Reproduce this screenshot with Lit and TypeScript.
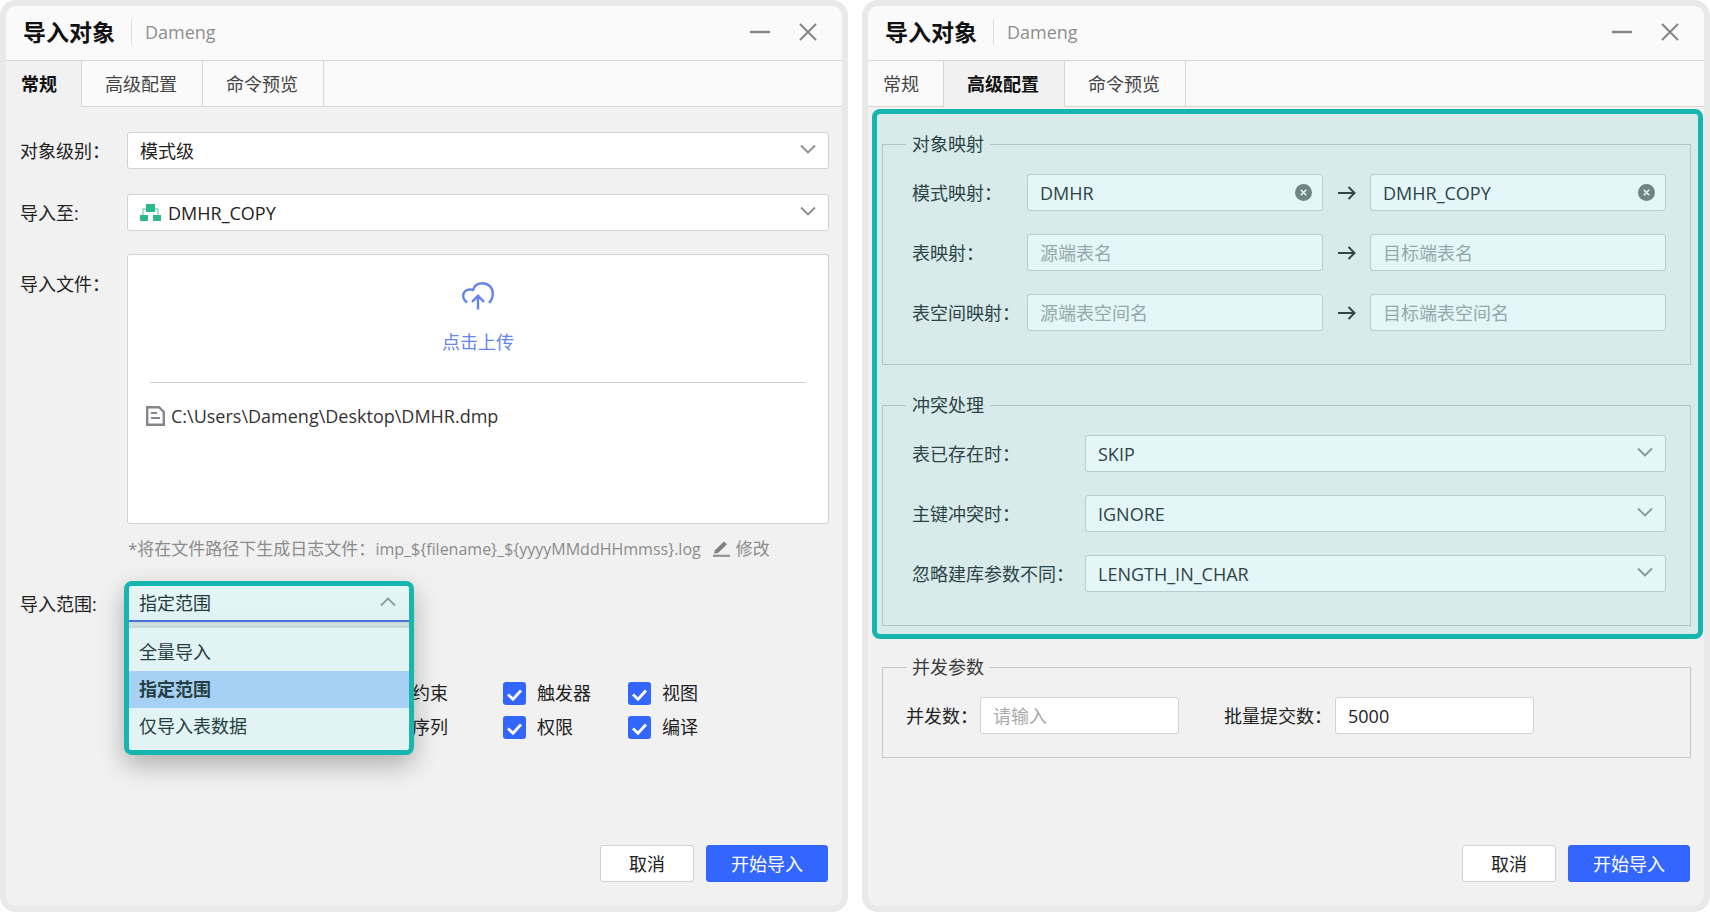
import { LitElement, html, css, nothing } from "lit";
import { customElement, property } from "lit/decorators.js";

const chevron = (up = false) => html`<svg class="chevron" viewBox="0 0 16 10" width="16" height="10" aria-hidden="true">
  <path d=${up ? "M1 8.5 8 1.5 15 8.5" : "M1 1.5 8 8.5 15 1.5"} fill="none" stroke="currentColor" stroke-width="1.8" />
</svg>`;

const arrow = html`<svg class="arrow" viewBox="0 0 18 16" width="18" height="16" aria-hidden="true">
  <path d="M0 8H16M10.5 2 16.5 8 10.5 14" fill="none" stroke="currentColor" stroke-width="2" />
</svg>`;

const base = css`
  :host {
    display: block;
    box-sizing: border-box;
  }
  *,
  *::before,
  *::after {
    box-sizing: border-box;
  }
  button,
  input,
  select {
    font: inherit;
    color: inherit;
    margin: 0;
  }
  button {
    cursor: pointer;
  }
  .field {
    display: grid;
    align-items: center;
    min-width: 0;
  }
  .field > * {
    grid-area: 1 / 1;
  }
  .box {
    appearance: none;
    width: 100%;
    min-width: 0;
    height: 37px;
    padding: 0 12px;
    border: 1px solid var(--line, #d2d2d2);
    border-radius: 3px;
    background: var(--fill, #fff);
    color: var(--ink, #222);
    outline: none;
  }
  .box::placeholder {
    color: var(--faint, #aaa);
    opacity: 1;
  }
  .chevron {
    justify-self: end;
    margin: 0 13px 4px 0;
    color: var(--mark, #8c8c8c);
    pointer-events: none;
  }
`;

@customElement("import-dialog")
class ImportDialog extends LitElement {
  @property({ type: Number }) active = 0;

  static styles = [
    base,
    css`
      :host {
        display: flex;
        flex-direction: column;
        flex: 1 1 0;
        min-width: 0;
        border: 6px solid #e9e9e9;
        border-radius: 16px;
        background: #f1f1f1;
      }
      .head {
        display: flex;
        align-items: center;
        height: 55px;
        padding: 0 22px 2px 17px;
        border-bottom: 1px solid #d6d6d6;
        border-radius: 10px 10px 0 0;
        background: #fafafa;
      }
      .title {
        margin: 0;
        font-size: 23px;
        line-height: 32px;
        font-weight: 700;
        color: #111;
      }
      .source {
        margin-left: 16px;
        padding-left: 13px;
        border-left: 1px solid #dcdcdc;
        line-height: 26px;
        color: #8e8e8e;
      }
      .tools {
        display: flex;
        gap: 24px;
        margin-left: auto;
      }
      .tool {
        display: grid;
        place-items: center;
        width: 24px;
        height: 24px;
        padding: 0;
        border: 0;
        background: none;
        color: #858585;
      }
      .tabs {
        display: flex;
        height: 46px;
        background: #fafafa;
      }
      .tabs::after {
        content: "";
        flex: 1;
        border-bottom: 1px solid #d6d6d6;
      }
      .tab {
        padding: 0 25px 2px 23px;
        border: 0;
        border-right: 1px solid #d6d6d6;
        border-bottom: 1px solid #d6d6d6;
        background: none;
        color: #444;
      }
      .tab:first-child {
        padding-right: 24px;
        padding-left: 15px;
      }
      .tab[aria-selected="true"] {
        border-bottom-color: transparent;
        background: #f1f1f1;
        font-weight: 700;
        color: #111;
      }
      .body {
        flex: 1;
      }
      .foot {
        display: flex;
        justify-content: flex-end;
        gap: 12px;
        padding: 0 14px 24px;
      }
      .action {
        height: 37px;
        padding: 0 24px 2px;
        border: 1px solid #3366ff;
        border-radius: 3px;
        background: #3366ff;
        color: #fff;
      }
      .action.plain {
        padding: 0 28px 2px;
        border-color: #d0d0d0;
        background: #fff;
        color: #222;
      }
    `,
  ];

  render() {
    const tabs = ["常规", "高级配置", "命令预览"];
    return html`
      <header class="head">
        <h1 class="title">导入对象</h1>
        <span class="source">Dameng</span>
        <div class="tools">
          <button class="tool" aria-label="最小化">
            <svg viewBox="0 0 20 18" width="20" height="18"><path d="M0 9H20" stroke="currentColor" stroke-width="2.4" /></svg>
          </button>
          <button class="tool" aria-label="关闭">
            <svg viewBox="0 0 18 18" width="18" height="18">
              <path d="M1 1 17 17M17 1 1 17" stroke="currentColor" stroke-width="2" />
            </svg>
          </button>
        </div>
      </header>
      <div class="tabs" role="tablist">
        ${tabs.map((t, i) => html`<button class="tab" role="tab" aria-selected=${i === this.active}>${t}</button>`)}
      </div>
      <div class="body"><slot></slot></div>
      <footer class="foot">
        <button class="action plain">取消</button>
        <button class="action">开始导入</button>
      </footer>
    `;
  }
}

@customElement("general-form")
class GeneralForm extends LitElement {
  static styles = [
    base,
    css`
      :host {
        padding: 25px 13px 0 14px;
      }
      .row {
        display: grid;
        grid-template-columns: 107px minmax(0, 1fr);
        align-items: center;
      }
      .row + .row {
        margin-top: 25px;
      }
      .row + .row.file {
        align-items: start;
        margin-top: 23px;
      }
      .label {
        line-height: 24px;
        color: #222;
      }
      .file .label {
        padding-top: 18px;
      }
      .with-icon .box {
        padding-left: 40px;
      }
      .lead {
        margin-left: 13px;
        pointer-events: none;
      }
      .drop {
        height: 270px;
        padding: 0 22px;
        border: 1px solid #d2d2d2;
        border-radius: 3px;
        background: #fff;
      }
      .upload {
        display: flex;
        flex-direction: column;
        align-items: center;
        gap: 18px;
        width: 100%;
        height: 128px;
        padding: 27px 0 0;
        border: 0;
        border-bottom: 1px solid #cfcfcf;
        background: none;
        line-height: 28px;
        color: #6485ee;
      }
      .path {
        display: flex;
        align-items: center;
        gap: 6px;
        margin: 19px 0 0 -4px;
        line-height: 28px;
        color: #333;
      }
      .hint {
        display: flex;
        align-items: center;
        margin: 12px 0 0;
        padding-left: 108px;
        font-size: 17px;
        line-height: 26px;
        color: #8b8b8b;
      }
      .pattern {
        font-size: 16px;
      }
      .edit {
        display: flex;
        align-items: center;
        gap: 6px;
        margin-left: 12px;
        padding: 0;
        border: 0;
        background: none;
      }
      .hint + .row {
        margin-top: 19px;
      }
      .range {
        position: relative;
        height: 46px;
      }
      .menu {
        position: absolute;
        top: 0;
        left: -3px;
        width: 290px;
        border: 5px solid #16b5ae;
        border-radius: 8px;
        background: #e1f3f2;
        box-shadow: 0 10px 26px rgba(0, 0, 0, 0.28);
        overflow: hidden;
        --fill: linear-gradient(#e4f7f7, #dff1f0);
        --mark: #8aa09f;
        --ink: #24393a;
      }
      .menu .box {
        height: 36px;
        padding: 0 10px;
        border: 0;
        border-bottom: 2px solid #4a6fdc;
        border-radius: 0;
      }
      .list {
        margin: 0;
        padding: 12px 0 5px;
        list-style: none;
        background: linear-gradient(#c7dad9, #cfe1e0 4px, #b5c8c7 5px, #e1f3f2 6px);
      }
      .option {
        padding: 0 10px;
        line-height: 37px;
        color: #263f41;
      }
      .option[aria-selected="true"] {
        background: #a7d1f4;
        font-weight: 600;
      }
      .kinds {
        display: grid;
        grid-template-columns: repeat(3, 125px);
        row-gap: 11px;
        margin: 55px 0 0;
        padding: 0 0 0 358px;
        border: 0;
      }
      .kind {
        display: flex;
        align-items: center;
        gap: 11px;
        height: 23px;
        line-height: 23px;
        color: #222;
      }
      .tick {
        display: grid;
      }
      .tick > * {
        grid-area: 1 / 1;
      }
      .check {
        appearance: none;
        width: 23px;
        height: 23px;
        border-radius: 3px;
        background: #3366ff;
      }
    `,
  ];

  render() {
    return html`
      <div class="row">
        <label class="label" for="level">对象级别：</label>
        <div class="field">
          <select class="box" id="level"><option>模式级</option></select>${chevron()}
        </div>
      </div>
      <div class="row">
        <label class="label" for="target">导入至:</label>
        <div class="field with-icon">
          <select class="box" id="target"><option>DMHR_COPY</option></select>
          <svg class="lead" viewBox="0 0 21 18" width="21" height="18" aria-hidden="true">
            <path d="M6 5H3V12M15 5H18V12" fill="none" stroke="#8ed8bd" stroke-width="1.4" />
            <path d="M6 0H15V8H6ZM0 11H8V17H0ZM13 11H21V17H13Z" fill="#2cb88c" />
          </svg>
          ${chevron()}
        </div>
      </div>
      <div class="row file">
        <span class="label">导入文件：</span>
        <div class="drop">
          <button class="upload">
            <svg viewBox="0 0 32 28" width="32" height="28" aria-hidden="true">
              <path
                d="M5.2 20.5C2.6 18.9 1.2 16.5 1.2 13.8C1.2 9.8 4.2 7.4 8.2 7.5L11 7.9C12.3 3.8 15.9 1.2 20.3 1.2C26.3 1.2 30.8 5.6 30.8 11.4C30.8 15.6 29.5 18.4 27 20.8M16 27.5V14M10 19.8 16 13.8 22 19.8"
                fill="none" stroke="currentColor" stroke-width="2.4" />
            </svg>
            点击上传
          </button>
          <div class="path">
            <svg viewBox="0 0 19 20" width="19" height="20" aria-hidden="true">
              <path d="M1.200 1.200H13L17.800 6V18.800H1.200Z" fill="none" stroke="#85858c" stroke-width="2.400" />
              <path d="M5 7H11M5 12H14" stroke="#85858c" stroke-width="2" />
            </svg>
            C:\\Users\\Dameng\\Desktop\\DMHR.dmp
          </div>
        </div>
      </div>
      <p class="hint">
        <span>*将在文件路径下生成日志文件：<span class="pattern">imp_\${filename}_\${yyyyMMddHHmmss}.log</span></span>
        <button class="edit">
          <svg viewBox="0 0 17 16" width="17" height="16" aria-hidden="true">
            <path d="M0 14.8H17" stroke="#929292" stroke-width="2.2" />
            <path d="M1 12.5 2 9.2 11 0.5 14 3.2 5 12Z" fill="#7f7f7f" />
          </svg>
          修改
        </button>
      </p>
      <div class="row">
        <label class="label" for="range">导入范围:</label>
        <div class="range">
          <div class="menu">
            <div class="field">
              <select class="box" id="range"><option>指定范围</option></select>${chevron(true)}
            </div>
            <ul class="list" role="listbox" aria-label="导入范围">
              ${["全量导入", "指定范围", "仅导入表数据"].map(
                (o) => html`<li class="option" role="option" aria-selected=${o === "指定范围"}>${o}</li>`
              )}
            </ul>
          </div>
        </div>
      </div>
      <fieldset class="kinds">
        ${["约束", "触发器", "视图", "序列", "权限", "编译"].map(
          (k) => html`<label class="kind">
            <span class="tick">
              <input class="check" type="checkbox" checked />
              <svg viewBox="0 0 23 23" width="23" height="23" aria-hidden="true">
                <path d="M5 12.5 10 17.3 18 8.5" fill="none" stroke="#fff" stroke-width="2.8" />
              </svg>
            </span>
            ${k}
          </label>`
        )}
      </fieldset>
    `;
  }
}

@customElement("advanced-form")
class AdvancedForm extends LitElement {
  static styles = [
    base,
    css`
      .marked {
        margin: 2px 1px 0 4px;
        padding: 16px 7px 8px 5px;
        border: 5px solid #16b5ae;
        border-radius: 8px;
        background: #d8eaea;
        --line: #b7cccc;
        --fill: #e4f6f7;
        --ink: #2c4446;
        --faint: #93a9a9;
        --mark: #829a9a;
        --edge: #b3c5c5;
      }
      .group {
        min-width: 0;
        margin: 0;
        padding: 16px 24px 33px 23px;
        border: 1px solid var(--edge, #c9c9c9);
      }
      .group + .group {
        margin-top: 26px;
      }
      .group.loose {
        margin: 14px 13px 0 14px;
        padding-bottom: 23px;
      }
      .name {
        padding: 0 6px;
        line-height: 28px;
        color: var(--ink, #3a3a3a);
      }
      .pair,
      .choice {
        display: grid;
        align-items: center;
        padding-left: 6px;
      }
      .pair {
        grid-template-columns: 115px minmax(0, 1fr) 47px minmax(0, 1fr);
      }
      .choice {
        grid-template-columns: 173px minmax(0, 1fr);
      }
      .pair + .pair,
      .choice + .choice {
        margin-top: 23px;
      }
      .label {
        line-height: 24px;
        white-space: nowrap;
        color: var(--ink, #222);
      }
      .arrow {
        justify-self: center;
        color: #2f4848;
      }
      .clear {
        justify-self: end;
        display: grid;
        margin-right: 11px;
        padding: 0;
        border: 0;
        background: none;
      }
      .line {
        display: flex;
        align-items: center;
      }
      .line .label {
        flex: 0 0 74px;
      }
      .line .label.wide {
        flex-basis: 111px;
        margin-left: 45px;
      }
      .line .box {
        flex: 0 1 199px;
      }
    `,
  ];

  private mapField(label: string, value: string, placeholder: string) {
    return html`<div class="field">
      <input class="box" type="text" aria-label=${label} .value=${value} placeholder=${placeholder} />
      ${value
        ? html`<button class="clear" aria-label="清除">
            <svg viewBox="0 0 17 17" width="17" height="17">
              <circle cx="8.5" cy="8.5" r="8.5" fill="#6f8584" />
              <path d="M5.8 5.8 11.2 11.2M11.2 5.8 5.8 11.2" stroke="#e4f6f7" stroke-width="1.6" />
            </svg>
          </button>`
        : nothing}
    </div>`;
  }

  render() {
    const maps = [
      ["模式映射：", "DMHR", "", "DMHR_COPY", ""],
      ["表映射：", "", "源端表名", "", "目标端表名"],
      ["表空间映射：", "", "源端表空间名", "", "目标端表空间名"],
    ];
    const choices = [
      ["表已存在时：", "SKIP"],
      ["主键冲突时：", "IGNORE"],
      ["忽略建库参数不同：", "LENGTH_IN_CHAR"],
    ];
    return html`
      <div class="marked">
        <fieldset class="group">
          <legend class="name">对象映射</legend>
          ${maps.map(
            ([label, from, fromHint, to, toHint]) => html`<div class="pair">
              <span class="label">${label}</span>
              ${this.mapField(label, from, fromHint)} ${arrow} ${this.mapField(label, to, toHint)}
            </div>`
          )}
        </fieldset>
        <fieldset class="group">
          <legend class="name">冲突处理</legend>
          ${choices.map(
            ([label, value], i) => html`<div class="choice">
              <label class="label" for="choice-${i}">${label}</label>
              <div class="field">
                <select class="box" id="choice-${i}"><option>${value}</option></select>${chevron()}
              </div>
            </div>`
          )}
        </fieldset>
      </div>
      <fieldset class="group loose">
        <legend class="name">并发参数</legend>
        <div class="line">
          <label class="label" for="threads">并发数：</label>
          <input class="box" id="threads" type="text" placeholder="请输入" />
          <label class="label wide" for="batch">批量提交数：</label>
          <input class="box" id="batch" type="text" value="5000" />
        </div>
      </fieldset>
    `;
  }
}

@customElement("app-root")
class AppRoot extends LitElement {
  static styles = css`
    :host {
      box-sizing: border-box;
      display: flex;
      gap: 14px;
      min-height: 100vh;
      background: #fff;
      font-family: "Open Sans", "Noto Sans CJK SC", sans-serif;
      font-size: 18px;
    }
  `;

  render() {
    return html`
      <import-dialog .active=${0}><general-form></general-form></import-dialog>
      <import-dialog .active=${1}><advanced-form></advanced-form></import-dialog>
    `;
  }
}
